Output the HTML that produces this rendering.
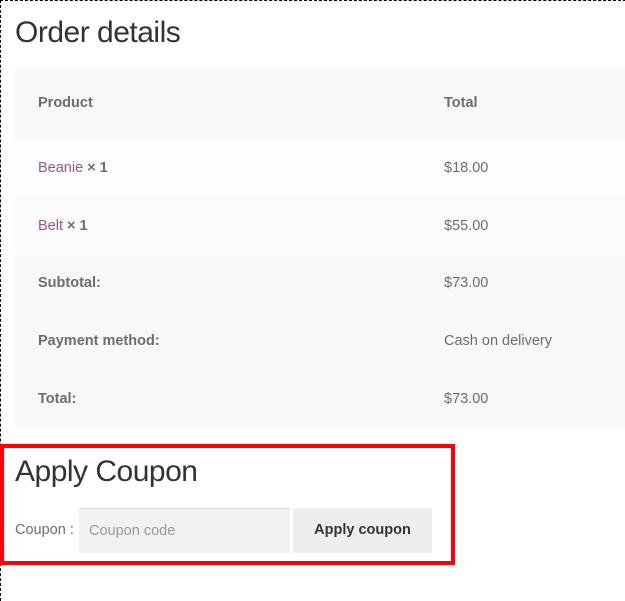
<!DOCTYPE html>
<html><head><style>
body{margin:0;width:625px;height:588px;overflow:hidden;background:#fff;font-family:"Liberation Sans",sans-serif;color:#6d6d6d;position:relative}
.frame{position:absolute;left:0;top:0;width:640px;height:600px;border-top:1px dashed #000;border-left:1px dashed #000}
h2{position:absolute;left:15px;margin:0;font-weight:300;color:#333;font-size:30px;letter-spacing:-0.5px}
.row{position:absolute;left:15px;width:610px;font-size:14.5px}
.row span{position:absolute;left:23px}
.row .r{left:429px}
.b{font-weight:bold}
a{color:#96588a;text-decoration:none}
.red{position:absolute;left:0;top:444px;width:447px;height:113px;border:4px solid #f00}
</style></head><body>
<div class="frame"></div>
<h2 style="top:16px">Order details</h2>
<div class="row" style="top:68px;height:71px;line-height:71px;background:#f8f8f8"><span class="b">Product</span><span class="r b">Total</span></div>
<div class="row" style="top:139px;height:58px;line-height:58px;background:#fdfdfd"><span><a>Beanie</a> <b>× 1</b></span><span class="r">$18.00</span></div>
<div class="row" style="top:197px;height:58px;line-height:58px;background:#fbfbfb"><span><a>Belt</a> <b>× 1</b></span><span class="r">$55.00</span></div>
<div class="row" style="top:255px;height:57px;line-height:57px;background:#f8f8f8"><span class="b">Subtotal:</span><span class="r">$73.00</span></div>
<div class="row" style="top:312px;height:58px;line-height:58px;background:#f8f8f8"><span class="b">Payment method:</span><span class="r">Cash on delivery</span></div>
<div class="row" style="top:370px;height:58px;line-height:58px;background:#f8f8f8"><span class="b">Total:</span><span class="r">$73.00</span></div>
<div class="red"></div>
<h2 style="top:455px">Apply Coupon</h2>
<div style="position:absolute;left:15px;top:522px;font-size:14.5px">Coupon :</div>
<div style="position:absolute;left:79px;top:508px;width:211px;height:45px;background:#f2f2f2;border-top:1px solid #ddd;box-sizing:border-box;color:#999;font-size:14.5px;line-height:44px;padding-left:10px">Coupon code</div>
<div style="position:absolute;left:293px;top:508px;width:139px;height:45px;background:#eee;color:#333;font-weight:bold;font-size:14.5px;line-height:45px;text-align:center">Apply coupon</div>
</body></html>
